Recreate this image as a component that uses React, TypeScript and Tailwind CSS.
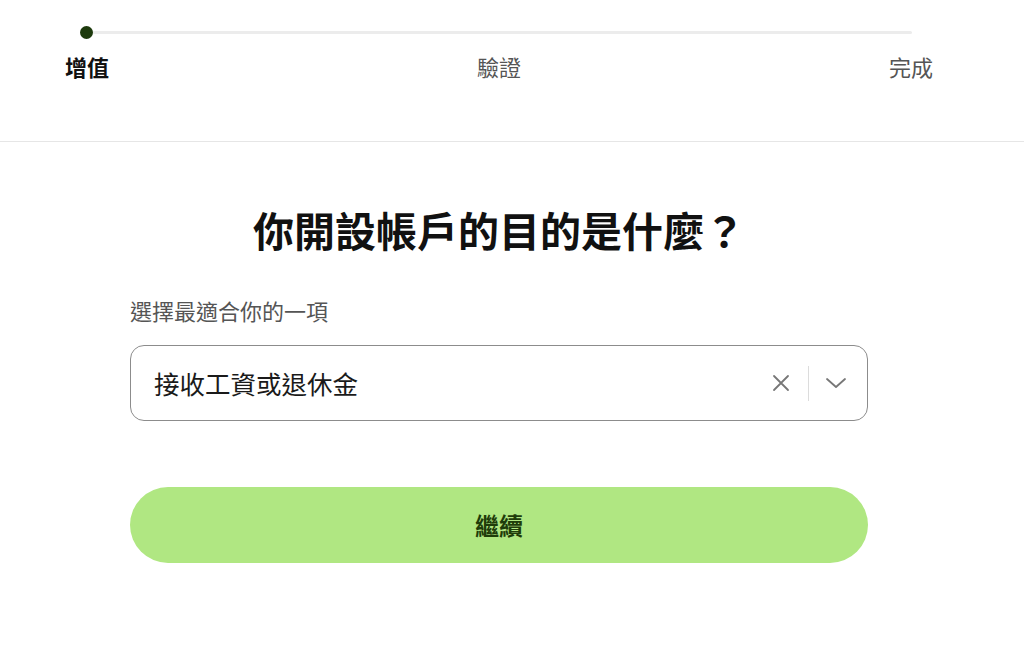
import React from "react";

const steps = ["增值", "驗證", "完成"];

export default function App() {
  return (
    <div
      className="min-h-[669px] w-full bg-white text-[#111]"
      style={{ fontFamily: '"Noto Sans CJK TC", "Noto Sans", sans-serif' }}
    >
      <header className="h-[142px] border-b border-[#e6e6e6]">
        <div className="w-[998px] px-[65px] pt-[31px]">
          <div className="relative mx-[21px] h-[3px] rounded-full bg-[#ececec]">
            <span className="absolute -left-[6px] -top-[5px] h-[13px] w-[13px] rounded-full bg-[#1d3a0d]" />
          </div>
          <div className="mt-[17px] flex justify-between text-[22px] leading-[30px]">
            {steps.map((s, i) => (
              <span
                key={s}
                className={i === 0 ? "font-bold text-[#111]" : "text-[#555]"}
              >
                {s}
              </span>
            ))}
          </div>
        </div>
      </header>

      <div className="w-[998px]">
        <main className="mx-auto w-[738px]">
          <h1 className="mt-[63px] text-center text-[41px] font-bold leading-[48px] text-[#111]">
            你開設帳戶的目的是什麼？
          </h1>

          <label className="mt-[42px] block text-[22px] leading-[30px] text-[#555]">
            選擇最適合你的一項
          </label>

          <div className="mt-[20px] flex h-[76px] items-center rounded-[14px] border-[1.5px] border-[#8c8c8c] pl-[23px] pr-[20px]">
            <span className="flex-1 text-[25.5px] leading-none text-[#1a1a1a]">
              接收工資或退休金
            </span>
            <svg width="20" height="20" viewBox="0 0 20 20" className="mr-[17px]">
              <path
                d="M3 3L17 17M17 3L3 17"
                stroke="#777"
                strokeWidth="1.8"
                strokeLinecap="round"
                fill="none"
              />
            </svg>
            <span className="h-[35px] w-px bg-[#dcdcdc]" />
            <svg width="22" height="12" viewBox="0 0 22 12" className="ml-[16px]">
              <path
                d="M2 2L11 10L20 2"
                stroke="#777"
                strokeWidth="1.8"
                strokeLinecap="round"
                strokeLinejoin="round"
                fill="none"
              />
            </svg>
          </div>

          <button className="mt-[66px] flex h-[76px] w-full items-center justify-center rounded-full bg-[#b0e782] text-[24px] font-bold text-[#1f3d0a]">
            繼續
          </button>
        </main>
      </div>
    </div>
  );
}
